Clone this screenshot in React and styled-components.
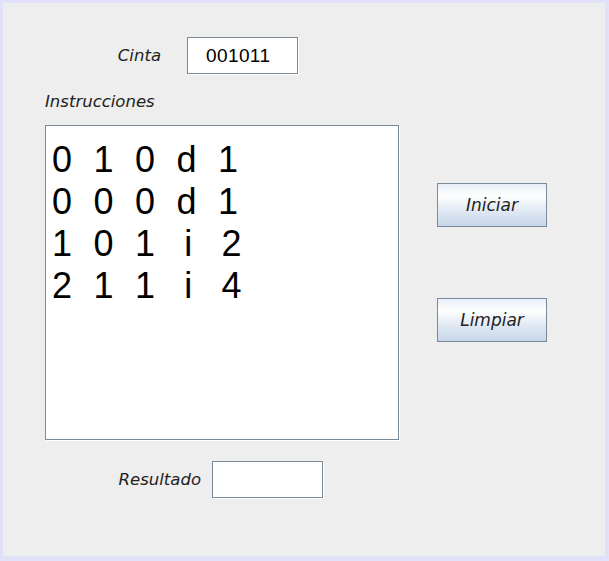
import React from "react";
import styled, { createGlobalStyle } from "styled-components";

const GlobalStyle = createGlobalStyle`
  html, body {
    margin: 0;
    padding: 0;
    background: #e1e1f9;
  }
`;

const Window = styled.div`
  box-sizing: border-box;
  width: 602px;
  height: 553px;
  margin: 3px 0 0 3px;
  background: #eeeeee;
  padding: 34px 0 0 42px;
  display: flex;
  flex-direction: column;
  font-family: "DejaVu Sans", "Liberation Sans", sans-serif;
`;

const Row = styled.div`
  display: flex;
  align-items: center;
  margin-top: ${p => p.$top || 0}px;
`;

const Label = styled.div`
  width: ${p => p.$width || "auto"};
  margin-right: ${p => p.$gap || 0}px;
  text-align: ${p => p.$align || "left"};
  font-style: italic;
  font-size: 16.5px;
  line-height: 20px;
  color: #222;
`;

const Field = styled.div`
  box-sizing: border-box;
  width: 111px;
  height: 37px;
  background: #fff;
  border: 1px solid #7a8a99;
  box-shadow: 1px 1px 0 #ffffff;
  padding-left: 18px;
  font-family: "Liberation Sans", Arial, sans-serif;
  font-size: 19px;
  letter-spacing: 0.4px;
  line-height: 35px;
  color: #000;
`;

const Main = styled.div`
  display: flex;
  margin-top: 13px;
`;

const TextArea = styled.div`
  box-sizing: border-box;
  width: 354px;
  height: 315px;
  background: #fff;
  border: 1px solid #7a8a99;
  box-shadow: 1px 1px 0 #ffffff;
  padding: 13px 0 0 6px;
  font-family: "Liberation Sans", Arial, sans-serif;
  font-size: 36px;
  line-height: 42px;
  letter-spacing: 0.5px;
  white-space: pre;
  color: #000;
`;

const Buttons = styled.div`
  display: flex;
  flex-direction: column;
  gap: 71px;
  margin: 58px 0 0 38px;
`;

const Button = styled.button`
  box-sizing: border-box;
  width: 110px;
  height: 44px;
  border: 1px solid #7a8a9a;
  background: linear-gradient(to bottom, #e7eef8 0%, #ffffff 28%, #e3ebf5 60%, #c6d6e8 100%);
  font-family: "DejaVu Sans", "Liberation Sans", sans-serif;
  font-style: italic;
  font-size: 17px;
  color: #222;
  padding: 0;
  cursor: pointer;
`;

const lines = [
  "0  1  0  d  1",
  "0  0  0  d  1",
  "1  0  1  \u2009i  \u20092",
  "2  1  1  \u2009i  \u20094"
];

export default function App() {
  return (
    <>
      <GlobalStyle />
      <Window>
        <Row>
          <Label $width="116px" $align="right" $gap={26}>
            Cinta
          </Label>
          <Field>001011</Field>
        </Row>
        <Row $top={18}>
          <Label>Instrucciones</Label>
        </Row>
        <Main>
          <TextArea>{lines.join("\n")}</TextArea>
          <Buttons>
            <Button>Iniciar</Button>
            <Button>Limpiar</Button>
          </Buttons>
        </Main>
        <Row $top={21}>
          <Label $width="156px" $align="right" $gap={11}>
            Resultado
          </Label>
          <Field />
        </Row>
      </Window>
    </>
  );
}
